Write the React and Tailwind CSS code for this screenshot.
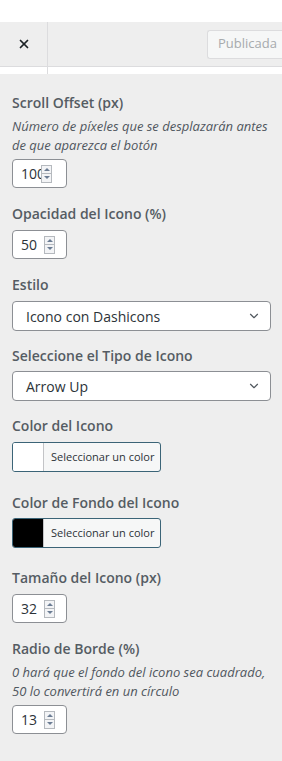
import { X, ChevronDown } from 'lucide-react';

const font = { fontFamily: '"Open Sans", "Noto Sans", sans-serif' };

function Spinner() {
  return (
    <span className="flex h-[18px] w-[11px] flex-col border border-[#b5b9be] bg-[#f3f4f6]">
      <span className="flex flex-1 items-center justify-center border-b border-[#b5b9be]">
        <span className="h-0 w-0 border-x-[3px] border-b-[3px] border-x-transparent border-b-[#6b7c93]" />
      </span>
      <span className="flex flex-1 items-center justify-center">
        <span className="h-0 w-0 border-x-[3px] border-t-[3px] border-x-transparent border-t-[#6b7c93]" />
      </span>
    </span>
  );
}

function NumberInput({ value, clipped }) {
  return (
    <div className="flex h-[29px] w-[55px] items-center rounded-[4px] border border-[#8c8f94] bg-white pl-[8px] pr-[6px]">
      <span
        className={
          clipped
            ? 'w-[20px] overflow-hidden whitespace-nowrap text-[14px] text-[#2c3338]'
            : 'w-[23px] text-[14px] text-[#2c3338]'
        }
      >
        {value}
      </span>
      <Spinner />
    </div>
  );
}

function Label({ children }) {
  return <div className="text-[14px] font-semibold leading-[20px] text-[#555c63]">{children}</div>;
}

function Desc({ children }) {
  return <div className="mt-[4px] text-[13px] italic leading-[19px] text-[#50575e]">{children}</div>;
}

function Select({ value }) {
  return (
    <div className="flex h-[30px] w-[259px] items-center justify-between rounded-[4px] border border-[#8c8f94] bg-white pl-[13px] pr-[9px] text-[14px] text-[#2c3338]">
      <span>{value}</span>
      <ChevronDown className="h-[14px] w-[14px] text-[#50575e]" strokeWidth={2} />
    </div>
  );
}

function ColorButton({ swatch }) {
  return (
    <div className="flex h-[30px] w-[149px] overflow-hidden rounded-[3px] border border-[#3b6477] bg-[#f6f7f7]">
      <span className={`w-[31px] shrink-0 border-r border-[#c3c4c7] ${swatch}`} />
      <span className="flex items-center whitespace-nowrap pl-[7px] text-[11px] text-[#2c3338]">
        Seleccionar un color
      </span>
    </div>
  );
}

export default function App() {
  return (
    <div className="h-[761px] w-[282px] overflow-hidden bg-[#eeeeee]" style={font}>
      <div className="h-[22px] bg-white" />
      <div className="flex h-[45px] border-b border-[#dcdcde] bg-[#eeeeee]">
        <div className="flex w-[48px] items-center justify-center border-r border-[#dcdcde]">
          <X className="h-[14px] w-[14px] text-[#1d2327]" strokeWidth={3} />
        </div>
        <div className="flex flex-1 items-center justify-end">
          <div className="flex h-[29px] w-[75px] items-center rounded-l-[3px] border border-r-0 border-[#dcdcde] bg-[#f6f7f7] pl-[10px] text-[13px] text-[#a7aaad]">
            Publicada
          </div>
        </div>
      </div>
      <div className="flex h-[7px]">
        <div className="w-[48px] border-r border-[#dcdcde] bg-white" />
        <div className="flex-1 bg-white" />
      </div>

      <div className="px-[12px] pt-[19px]">
        <Label>Scroll Offset (px)</Label>
        <Desc>
          Número de píxeles que se desplazarán antes de que aparezca el botón
        </Desc>
        <div className="mt-[4px]">
          <NumberInput value="100" clipped />
        </div>

        <div className="mt-[16px]">
          <Label>Opacidad del Icono (%)</Label>
        </div>
        <div className="mt-[6px]">
          <NumberInput value="50" />
        </div>

        <div className="mt-[16px]">
          <Label>Estilo</Label>
        </div>
        <div className="mt-[6px]">
          <Select value="Icono con Dashicons" />
        </div>

        <div className="mt-[15px]">
          <Label>Seleccione el Tipo de Icono</Label>
        </div>
        <div className="mt-[5px]">
          <Select value="Arrow Up" />
        </div>

        <div className="mt-[15px]">
          <Label>Color del Icono</Label>
        </div>
        <div className="mt-[6px]">
          <ColorButton swatch="bg-white" />
        </div>

        <div className="mt-[21px]">
          <Label>Color de Fondo del Icono</Label>
        </div>
        <div className="mt-[5px]">
          <ColorButton swatch="bg-black" />
        </div>

        <div className="mt-[20px]">
          <Label>Tamaño del Icono (px)</Label>
        </div>
        <div className="mt-[6px]">
          <NumberInput value="32" />
        </div>

        <div className="mt-[16px]">
          <Label>Radio de Borde (%)</Label>
        </div>
        <Desc>0 hará que el fondo del icono sea cuadrado, 50 lo convertirá en un círculo</Desc>
        <div className="mt-[4px]">
          <NumberInput value="13" />
        </div>
      </div>
    </div>
  );
}
